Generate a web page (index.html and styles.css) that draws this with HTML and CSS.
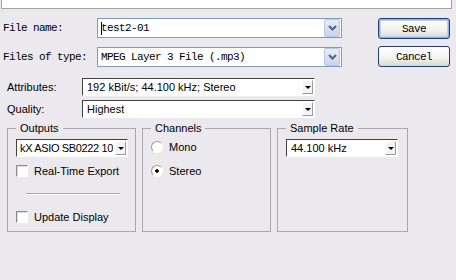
FILE: index.html
```html
<!DOCTYPE html>
<html lang="en">

<head>
    <meta charset="UTF-8">
    <title>Save As</title>
    <link rel="stylesheet" href="styles.css">
</head>

<body>
    <div class="top-pane"></div>

    <!-- ----------- file name / type ---------------- -->

    <div class="file-area">
        <div class="file-fields">
            <div class="file-row">
                <span class="file-label">File name:</span>
                <div class="xp-combo">
                    <span class="xp-text"><span class="caret"></span>test2-01</span>
                    <span class="xp-drop">
                        <svg width="9" height="6" viewBox="0 0 9 6"><path d="M1 1 L4.5 4.5 L8 1" fill="none" stroke="#4d6185" stroke-width="2"/></svg>
                    </span>
                </div>
            </div>
            <div class="file-row">
                <span class="file-label">Files of type:</span>
                <div class="xp-combo">
                    <span class="xp-text">MPEG Layer 3 File (.mp3)</span>
                    <span class="xp-drop">
                        <svg width="9" height="6" viewBox="0 0 9 6"><path d="M1 1 L4.5 4.5 L8 1" fill="none" stroke="#4d6185" stroke-width="2"/></svg>
                    </span>
                </div>
            </div>
        </div>

        <div class="file-buttons">
            <button class="xp-btn default">Save</button>
            <button class="xp-btn">Cancel</button>
        </div>
    </div>

    <!-- ----------- format ---------------- -->

    <div class="format-area">
        <div class="format-row">
            <span class="format-label">Attributes:</span>
            <div class="combo wide"><span class="combo-text">192 kBit/s; 44.100 kHz; Stereo</span><span class="combo-drop"></span></div>
        </div>
        <div class="format-row">
            <span class="format-label">Quality:</span>
            <div class="combo wide"><span class="combo-text">Highest</span><span class="combo-drop"></span></div>
        </div>
    </div>

    <!-- ----------- groups ---------------- -->

    <div class="groups">
        <fieldset class="group outputs">
            <legend>Outputs</legend>
            <div class="combo small"><span class="combo-text tight">kX ASIO SB0222 10</span><span class="combo-drop"></span></div>
            <label class="check first"><input type="checkbox"> Real-Time Export</label>
            <div class="sep"></div>
            <label class="check"><input type="checkbox"> Update Display</label>
        </fieldset>

        <fieldset class="group channels">
            <legend>Channels</legend>
            <label class="radio first"><input type="radio" name="ch"> Mono</label>
            <label class="radio"><input type="radio" name="ch" checked> Stereo</label>
        </fieldset>

        <fieldset class="group rate">
            <legend>Sample Rate</legend>
            <div class="combo small"><span class="combo-text">44.100 kHz</span><span class="combo-drop"></span></div>
        </fieldset>
    </div>
</body>

</html>
```

FILE: styles.css
```css
* {
    box-sizing: border-box;
    padding: 0;
    margin: 0;
}

body {
    width: 456px;
    height: 280px;
    overflow: hidden;
    background: #ece9ee;
    font-family: "Liberation Sans", Arial, sans-serif;
    font-size: 11px;
    color: #000;
}

.top-pane {
    margin-left: 1px;
    width: 451px;
    height: 9px;
    background: #fff;
    border: 1px solid #a5a5a5;
    border-top: none;
}

/* ----------- file name / type ---------------- */

.file-area {
    display: flex;
    margin-top: 9px;
    padding-left: 3px;
    font-family: "Liberation Mono", monospace;
    font-size: 11px;
    letter-spacing: -0.6px;
}

.file-row {
    display: flex;
    align-items: center;
    height: 20px;
    margin-bottom: 9px;
}

.file-label {
    width: 94px;
}

.xp-combo {
    width: 245px;
    height: 20px;
    border: 1px solid #7f9db9;
    background: #fff;
    display: flex;
    align-items: center;
    justify-content: space-between;
    padding: 1px;
}

.xp-text {
    padding-left: 2px;
    display: flex;
    align-items: center;
}

.caret {
    display: inline-block;
    width: 1px;
    height: 13px;
    background: #000;
    margin-right: -1px;
}

.xp-drop {
    width: 16px;
    height: 18px;
    border: 1px solid #b7c7e6;
    border-radius: 2px;
    background: linear-gradient(to bottom, #e6ecf7 0%, #c9d5ec 100%);
    display: flex;
    align-items: center;
    justify-content: center;
}

.file-buttons {
    display: flex;
    flex-direction: column;
    gap: 7px;
    margin-left: 36px;
}

.xp-btn {
    width: 72px;
    height: 21px;
    border: 1px solid #1d3f74;
    border-radius: 3px;
    background: linear-gradient(to bottom, #ffffff 0%, #f2f2ef 60%, #d8d6ce 100%);
    font-family: "Liberation Mono", monospace;
    font-size: 11px;
    letter-spacing: -0.6px;
    color: #000;
}

.xp-btn.default {
    box-shadow: inset 0 0 0 1px #8fb0e8, inset 0 0 0 2px #bcd0f2;
}

/* ----------- format ---------------- */

.format-area {
    margin-top: 2px;
    padding-left: 7px;
}

.format-row {
    display: flex;
    align-items: center;
    height: 18px;
    margin-bottom: 4px;
}

.format-label {
    width: 75px;
}

.combo {
    height: 18px;
    background: #fff;
    border-top: 1px solid #404040;
    border-left: 1px solid #404040;
    border-right: 1px solid #fff;
    border-bottom: 1px solid #fff;
    display: flex;
    align-items: center;
    justify-content: space-between;
    padding-right: 1px;
}

.combo.wide {
    width: 233px;
}

.combo.small {
    width: 112px;
}

.combo-text {
    padding-left: 4px;
    white-space: nowrap;
    overflow: hidden;
}

.combo-text.tight {
    padding-left: 3px;
    letter-spacing: -0.35px;
}

.combo-drop {
    flex: none;
    width: 11px;
    height: 14px;
    background: #f4f3f5;
    border-top: 1px solid #fff;
    border-left: 1px solid #fff;
    border-right: 1px solid #9a999d;
    border-bottom: 1px solid #9a999d;
    position: relative;
}

.combo-drop::after {
    content: "";
    position: absolute;
    left: 2px;
    top: 5px;
    border-left: 3px solid transparent;
    border-right: 3px solid transparent;
    border-top: 3px solid #000;
}

/* ----------- groups ---------------- */

.groups {
    display: flex;
    gap: 6px;
    padding-left: 7px;
    margin-top: 1px;
}

.group {
    height: 110px;
    border: 1px solid #a9a8ad;
    padding: 0 4px 0 8px;
    min-width: 0;
}

.outputs,
.channels {
    width: 129px;
}

.rate {
    width: 131px;
}

.group legend {
    padding: 0 4px;
}

.group .combo {
    margin-top: 5px;
}

.check,
.radio {
    display: flex;
    align-items: center;
    gap: 6px;
    height: 13px;
}

.check.first {
    margin-top: 7px;
}

.check input {
    appearance: none;
    width: 12px;
    height: 12px;
    background: #fff;
    border-top: 1px solid #8a898d;
    border-left: 1px solid #8a898d;
    border-right: 1px solid #fff;
    border-bottom: 1px solid #fff;
    box-shadow: inset 1px 1px 0 #dcdbe0;
}

.sep {
    margin: 16px 0 15px 10px;
    width: 94px;
    height: 2px;
    border-top: 1px solid #a9a8ad;
    border-bottom: 1px solid #fff;
}

.radio {
    margin-top: 11px;
}

.radio.first {
    margin-top: 6px;
}

.radio input {
    appearance: none;
    width: 12px;
    height: 12px;
    border-radius: 50%;
    background: #fff;
    border: 1px solid;
    border-color: #9a999d #fff #fff #9a999d;
}

.radio input:checked {
    background: radial-gradient(circle, #000 0 1.5px, #fff 2px);
}
```
